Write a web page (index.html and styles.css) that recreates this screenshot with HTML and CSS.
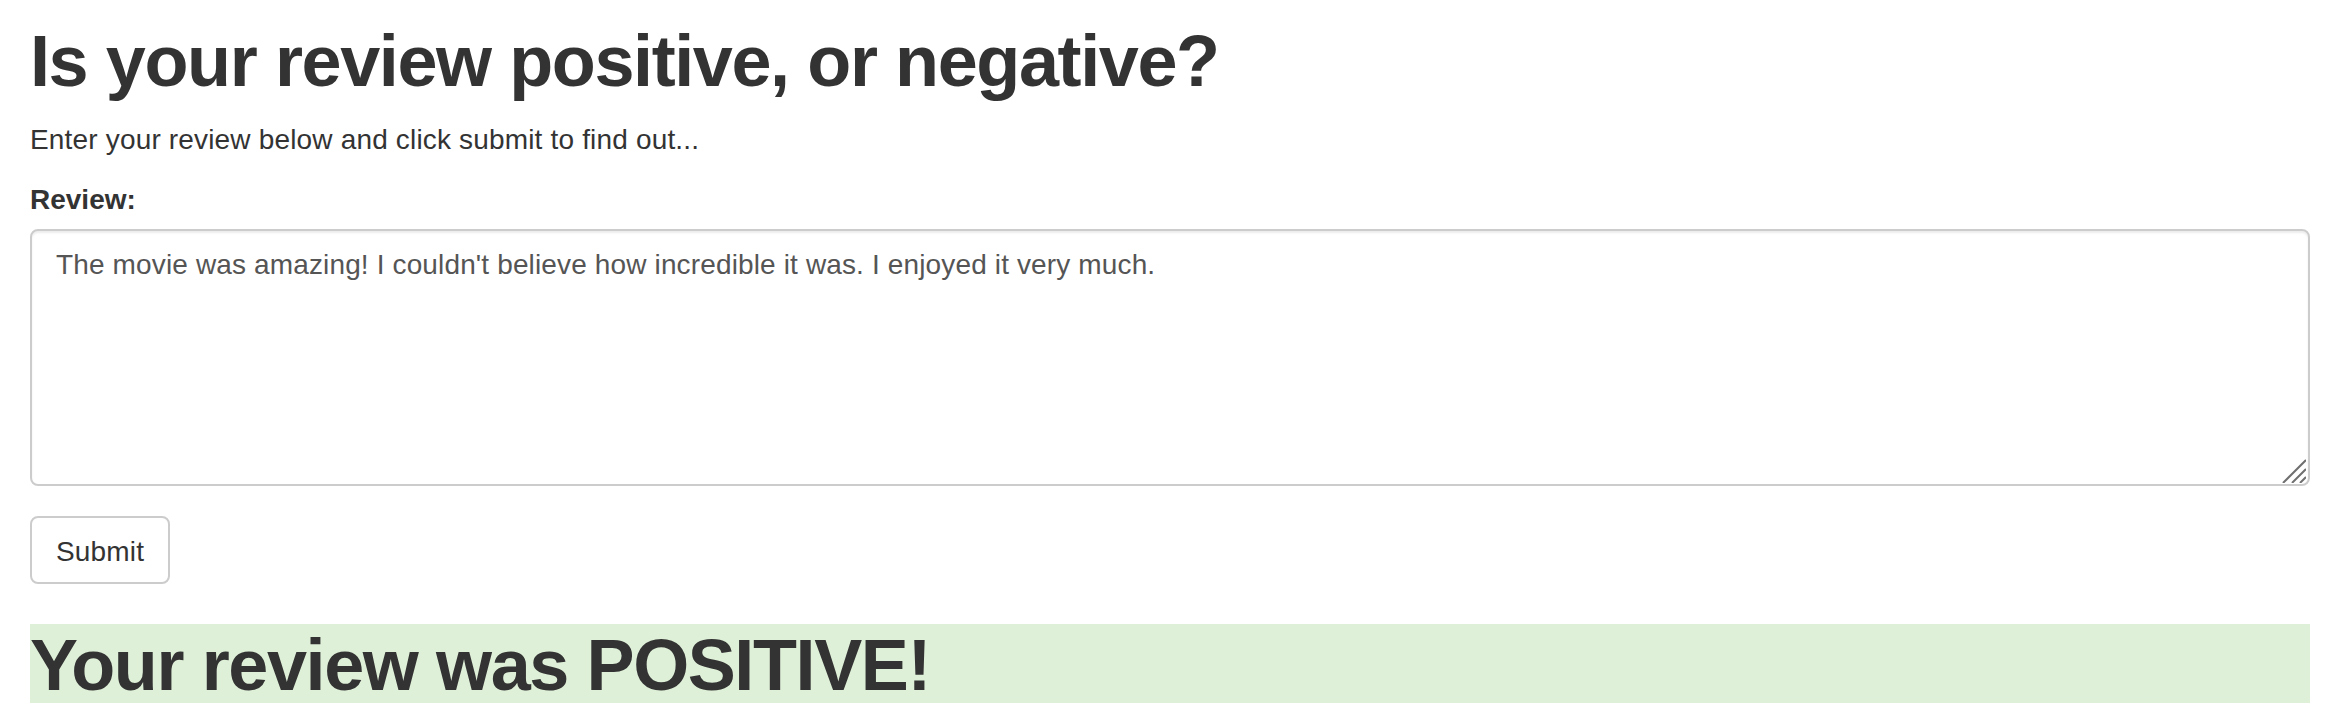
FILE: index.html
```html
<!DOCTYPE html>
<html lang="en">
<head>
<meta charset="utf-8">
<title>Review sentiment</title>
<link rel="stylesheet" href="styles.css">
</head>
<body>
<div class="container">
  <h1 class="title">Is your review positive, or negative?</h1>
  <p class="lead-text">Enter your review below and click submit to find out...</p>
  <form class="review-form">
    <div class="form-group">
      <label class="field-label" for="review">Review:</label>
      <div class="textarea-wrap">
        <textarea class="form-control" id="review">The movie was amazing! I couldn't believe how incredible it was. I enjoyed it very much.</textarea>
        <svg class="grip" width="24" height="24" viewBox="0 0 24 24" aria-hidden="true">
          <path d="M1 24 L24 1 M10 24 L24 10 M18 24 L24 18" stroke="#6f6f6f" stroke-width="2" fill="none"/>
        </svg>
      </div>
    </div>
    <button type="button" class="btn">Submit</button>
  </form>
  <h1 class="result bg-success">Your review was POSITIVE!</h1>
</div>
</body>
</html>
```

FILE: styles.css
```css
* { box-sizing: border-box; }
html, body { margin: 0; padding: 0; background: #fff; }
body {
  font-family: "Liberation Sans", Arial, Helvetica, sans-serif;
  font-size: 28px;
  line-height: 40px;
  color: #333;
  letter-spacing: 0.17px;
}
.container {
  padding: 0 24px 0 30px;
}
.title {
  font-size: 72px;
  font-weight: 700;
  line-height: 79px;
  margin: 20px 0 20px;
  padding-top: 2px;
  height: 79px;
  letter-spacing: -1.4px;
}
.lead-text {
  margin: 0 0 20px;
  padding-top: 1px;
  height: 40px;
}
.review-form { margin: 0; }
.form-group {
  margin-bottom: 30px;
}
.field-label {
  display: inline-block;
  font-weight: 700;
  margin-bottom: 10px;
  letter-spacing: 0;
  padding-top: 1px;
  height: 40px;
}
.textarea-wrap {
  position: relative;
}
.form-control {
  display: block;
  width: 100%;
  height: 257px;
  padding: 14px 24px 10px;
  font-family: inherit;
  font-size: 28px;
  line-height: 40px;
  letter-spacing: 0.14px;
  color: #555;
  background: #fff;
  border: 2px solid #ccc;
  border-radius: 8px;
  box-shadow: inset 0 2px 2px rgba(0,0,0,0.075);
  resize: none;
  margin: 0;
}
.grip {
  position: absolute;
  right: 4px;
  bottom: 3px;
  pointer-events: none;
}
.btn {
  display: inline-block;
  height: 68px;
  padding: 14px 24px 10px;
  font-family: inherit;
  font-size: 28px;
  line-height: 40px;
  letter-spacing: 0.17px;
  color: #333;
  background: #fff;
  border: 2px solid #ccc;
  border-radius: 8px;
  margin: 0;
  cursor: pointer;
}
.result {
  font-size: 72px;
  font-weight: 700;
  line-height: 79px;
  margin: 40px 0 0;
  padding-top: 2px;
  height: 79px;
  letter-spacing: -1.4px;
}
.bg-success { background: #dff0d8; }
```
